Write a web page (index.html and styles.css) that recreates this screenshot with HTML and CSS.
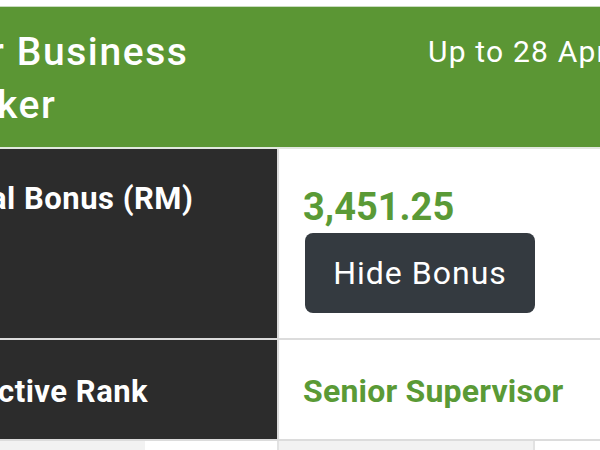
FILE: index.html
```html
<!DOCTYPE html>
<html>
<head>
<meta charset="utf-8">
<link rel="stylesheet" href="styles.css">
</head>
<body>
<div class="page">
  <div class="top-strip"></div>
  <div class="header">
    <div class="title">r Business<br><span class="title-2">ker</span></div>
    <div class="date">Up to 28 Apr</div>
  </div>
  <div class="table">
    <div class="row row-bonus">
      <div class="label">al Bonus (RM)</div>
      <div class="value">
        <div class="amount">3,451.25</div>
        <button class="btn">Hide Bonus</button>
      </div>
    </div>
    <div class="row row-rank">
      <div class="label">ctive Rank</div>
      <div class="value"><div class="rank">Senior Supervisor</div></div>
    </div>
    <div class="row row-next">
      <div class="cell-a"></div>
      <div class="cell-b"></div>
      <div class="cell-c"></div>
      <div class="cell-d"></div>
    </div>
  </div>
</div>
</body>
</html>
```

FILE: styles.css
```css
html, body {
  margin: 0;
  padding: 0;
  background: #ffffff;
  overflow: hidden;
}
.page {
  width: 600px;
  height: 450px;
  font-family: Roboto, "Liberation Sans", sans-serif;
  overflow: hidden;
}
.top-strip {
  height: 6px;
  background: #ffffff;
  border-bottom: 1px solid #c9dcc0;
}
.header {
  background: #5b9634;
  height: 142px;
  display: flex;
  justify-content: space-between;
  color: #ffffff;
  border-bottom: 2px solid #e2e8df;
  box-sizing: border-box;
}
.title {
  font-size: 39px;
  font-weight: 500;
  line-height: 53px;
  letter-spacing: 1.6px;
  padding-top: 19px;
  text-indent: -10px;
  white-space: nowrap;
  overflow: hidden;
}
.title-2 {
  margin-left: -3px;
}
.date {
  font-size: 30px;
  font-weight: 400;
  line-height: 36px;
  letter-spacing: 1.2px;
  padding-top: 27px;
  width: 172px;
  white-space: nowrap;
  overflow: hidden;
}
.table {
  display: flex;
  flex-direction: column;
}
.row {
  display: grid;
  grid-template-columns: 279px 1fr;
  border-bottom: 2px solid #dcdcdc;
}
.label {
  background: #2c2c2c;
  color: #ffffff;
  font-weight: 700;
  font-size: 31px;
  line-height: 36px;
  letter-spacing: 0.5px;
  text-indent: -10px;
  white-space: nowrap;
  overflow: hidden;
  border-right: 2px solid #dcdcdc;
}
.row-bonus { height: 191px; box-sizing: border-box; }
.row-bonus .label { padding-top: 32px; }
.value {
  padding-left: 24px;
}
.row-bonus .value { padding-top: 36px; }
.amount {
  color: #5a9a36;
  font-weight: 700;
  font-size: 38px;
  line-height: 44px;
}
.btn {
  margin-top: 4px;
  margin-left: 2px;
  background: #343a40;
  color: #ffffff;
  border: none;
  border-radius: 8px;
  font-family: Roboto, "Liberation Sans", sans-serif;
  font-size: 32px;
  letter-spacing: 1px;
  width: 230px;
  height: 80px;
  padding: 0;
}
.row-rank { height: 101px; box-sizing: border-box; }
.row-rank .label { padding-top: 34px; text-indent: -2px; }
.row-rank .value { padding-top: 33px; }
.rank {
  color: #5a9a36;
  font-weight: 700;
  font-size: 32px;
  line-height: 36px;
  letter-spacing: 0.2px;
  white-space: nowrap;
}
.row-next {
  display: grid;
  grid-template-columns: 145px 134px 256px 1fr;
  height: 10px;
  border-bottom: none;
}
.cell-a { background: #f2f2f2; }
.cell-b { background: #ffffff; border-right: 2px solid #e2e2e2; }
.cell-c { background: #f2f2f2; border-right: 2px solid #e2e2e2; }
.cell-d { background: #ffffff; }
```
